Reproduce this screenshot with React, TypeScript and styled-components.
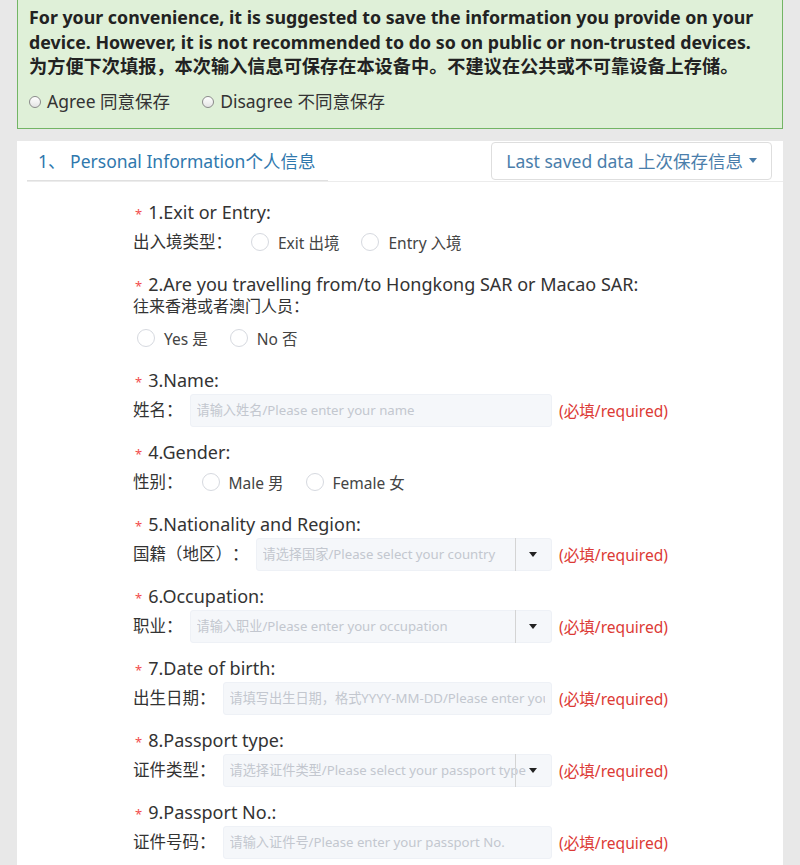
import React from 'react';
import styled, { createGlobalStyle } from 'styled-components';

const Global = createGlobalStyle`
  html, body { margin: 0; padding: 0; background: #e8e8e8; }
  body {
    font-family: "Noto Sans", "Noto Sans CJK SC", sans-serif;
    color: #333;
    text-spacing-trim: space-all;
  }
  * { box-sizing: border-box; }
`;

const Page = styled.div`
  padding: 0 17px 20px;
`;

const Notice = styled.div`
  background: #dff0d8;
  border: 1px solid #73b565;
  border-top: none;
  padding: 5px 11px 16px;
  font-family: "Noto Sans", "Noto Sans CJK SC", sans-serif;
`;

const NoticeText = styled.p`
  margin: 0;
  font-weight: 700;
  font-size: 17.8px;
  line-height: 24.5px;
  color: #222;
`;

const NoticeCn = styled.span`
  display: block;
  font-size: 18.2px;
  line-height: 24.5px;
`;

const ConsentRow = styled.div`
  display: flex;
  align-items: center;
  gap: 32px;
  margin-top: 11px;
  font-size: 17.5px;
  line-height: 22px;
  color: #333;
`;

const Consent = styled.label`
  display: flex;
  align-items: center;
  gap: 6px;
`;

const SmallRadio = styled.span`
  width: 12px;
  height: 12px;
  border-radius: 50%;
  border: 1px solid #8a8a8a;
  background: linear-gradient(#fff, #e4e4e4);
  margin-top: 2px;
`;

const Panel = styled.section`
  background: #fff;
  margin-top: 12px;
  padding-bottom: 20px;
`;

const PanelHead = styled.div`
  display: flex;
  justify-content: space-between;
  align-items: center;
  height: 41px;
  margin-left: 10px;
  padding-right: 11px;
  border-bottom: 1px solid #ececec;
`;

const Tab = styled.div`
  align-self: stretch;
  display: flex;
  align-items: center;
  width: 301px;
  padding-left: 11px;
  border-bottom: 1px solid #e0e0e0;
  font-size: 17.5px;
  color: #2f78ad;
  white-space: nowrap;
`;

const SavedButton = styled.button`
  height: 38px;
  padding: 0 14px;
  border: 1px solid #dedede;
  border-radius: 4px;
  background: #fff;
  font-family: "Noto Sans", "Noto Sans CJK SC", sans-serif;
  font-size: 17.5px;
  color: #4a7eab;
  display: flex;
  align-items: center;
  gap: 6px;
`;

const Caret = styled.span<{ $dark?: boolean }>`
  width: 0;
  height: 0;
  border-left: 4px solid transparent;
  border-right: 4px solid transparent;
  border-top: 5px solid ${p => (p.$dark ? '#222' : '#4a7eab')};
`;

const Body = styled.div`
  padding: 19px 0 0 116px;
`;

const Item = styled.div`
  margin-bottom: 14px;
`;

const Question = styled.div`
  font-size: 18px;
  line-height: 22px;
  color: #333;
`;

const QuestionCn = styled.span`
  display: block;
  font-size: 16px;
  line-height: 22px;
`;

const Star = styled.span`
  color: #f24d4d;
  font-size: 13px;
  line-height: 1;
  margin: 0 6px 0 2px;
`;

const Row = styled.div<{ $top?: number }>`
  display: flex;
  align-items: center;
  height: 33px;
  margin-top: ${p => p.$top ?? 3}px;
`;

const Field = styled.div`
  display: flex;
  align-items: center;
  width: 419px;
`;

const RowLabel = styled.span`
  font-size: 16.5px;
  line-height: 22px;
  white-space: nowrap;
  color: #333;
`;

const InputBox = styled.div`
  position: relative;
  flex: 1;
  margin-left: 7px;
  height: 33px;
`;

const TextInput = styled.input`
  width: 100%;
  height: 100%;
  background: #f5f7fa;
  border: 1px solid #eef1f6;
  border-radius: 3px;
  padding: 0 6px;
  font-family: "Noto Sans", "Noto Sans CJK SC", sans-serif;
  font-size: 13.2px;
  color: #333;
  outline: none;
  &::placeholder { color: #c3c7cf; }
`;

const SelectDivider = styled.span`
  position: absolute;
  top: 0;
  bottom: 0;
  right: 36px;
  width: 1px;
  background: #d4d4d4;
`;

const SelectCaret = styled.span`
  position: absolute;
  top: 0;
  bottom: 0;
  right: 15px;
  display: flex;
  align-items: center;
`;

const Required = styled.span`
  margin-left: 7px;
  font-size: 15.6px;
  color: #dc3a35;
  white-space: nowrap;
`;

const RadioGroup = styled.div<{ $indent?: number }>`
  display: flex;
  align-items: center;
  gap: 22px;
  margin-left: ${p => p.$indent ?? 19}px;
`;

const Option = styled.label`
  display: flex;
  align-items: center;
  gap: 9px;
  font-size: 15.5px;
  color: #444;
`;

const Circle = styled.span`
  width: 18px;
  height: 18px;
  border-radius: 50%;
  border: 1px solid #d6d9df;
  background: #fff;
`;

const Radios = ({ options, indent }: { options: string[]; indent?: number }) => (
  <RadioGroup $indent={indent}>
    {options.map(o => (
      <Option key={o}>
        <Circle />
        {o}
      </Option>
    ))}
  </RadioGroup>
);

const InputRow = ({ label, placeholder, select }: { label: string; placeholder: string; select?: boolean }) => (
  <Row>
    <Field>
      <RowLabel>{label}</RowLabel>
      <InputBox>
        <TextInput placeholder={placeholder} readOnly />
        {select && (
          <>
            <SelectDivider />
            <SelectCaret>
              <Caret $dark />
            </SelectCaret>
          </>
        )}
      </InputBox>
    </Field>
    <Required>(必填/required)</Required>
  </Row>
);

const Q = ({ children, cn }: { children: React.ReactNode; cn?: string }) => (
  <Question>
    <Star>*</Star>
    {children}
    {cn && <QuestionCn>{cn}</QuestionCn>}
  </Question>
);

export default function App() {
  return (
    <>
      <Global />
      <Page>
        <Notice>
          <NoticeText>
            For your convenience, it is suggested to save the information you provide on your device. However, it is not
            recommended to do so on public or non-trusted devices.
            <NoticeCn>为方便下次填报，本次输入信息可保存在本设备中。不建议在公共或不可靠设备上存储。</NoticeCn>
          </NoticeText>
          <ConsentRow>
            <Consent>
              <SmallRadio />
              Agree 同意保存
            </Consent>
            <Consent>
              <SmallRadio />
              Disagree 不同意保存
            </Consent>
          </ConsentRow>
        </Notice>

        <Panel>
          <PanelHead>
            <Tab>1、 Personal Information个人信息</Tab>
            <SavedButton>
              Last saved data 上次保存信息
              <Caret />
            </SavedButton>
          </PanelHead>

          <Body>
            <Item>
              <Q>1.Exit or Entry:</Q>
              <Row>
                <RowLabel>出入境类型：</RowLabel>
                <Radios options={['Exit 出境', 'Entry 入境']} />
              </Row>
            </Item>

            <Item>
              <Q cn="往来香港或者澳门人员：">2.Are you travelling from/to Hongkong SAR or Macao SAR:</Q>
              <Row $top={5}>
                <Radios options={['Yes 是', 'No 否']} indent={4} />
              </Row>
            </Item>

            <Item>
              <Q>3.Name:</Q>
              <InputRow label="姓名：" placeholder="请输入姓名/Please enter your name" />
            </Item>

            <Item>
              <Q>4.Gender:</Q>
              <Row>
                <RowLabel>性别：</RowLabel>
                <Radios options={['Male 男', 'Female 女']} />
              </Row>
            </Item>

            <Item>
              <Q>5.Nationality and Region:</Q>
              <InputRow label="国籍（地区）：" placeholder="请选择国家/Please select your country" select />
            </Item>

            <Item>
              <Q>6.Occupation:</Q>
              <InputRow label="职业：" placeholder="请输入职业/Please enter your occupation" select />
            </Item>

            <Item>
              <Q>7.Date of birth:</Q>
              <InputRow label="出生日期：" placeholder="请填写出生日期，格式YYYY-MM-DD/Please enter your date of birth" />
            </Item>

            <Item>
              <Q>8.Passport type:</Q>
              <InputRow label="证件类型：" placeholder="请选择证件类型/Please select your passport type" select />
            </Item>

            <Item>
              <Q>9.Passport No.:</Q>
              <InputRow label="证件号码：" placeholder="请输入证件号/Please enter your passport No." />
            </Item>
          </Body>
        </Panel>
      </Page>
    </>
  );
}
